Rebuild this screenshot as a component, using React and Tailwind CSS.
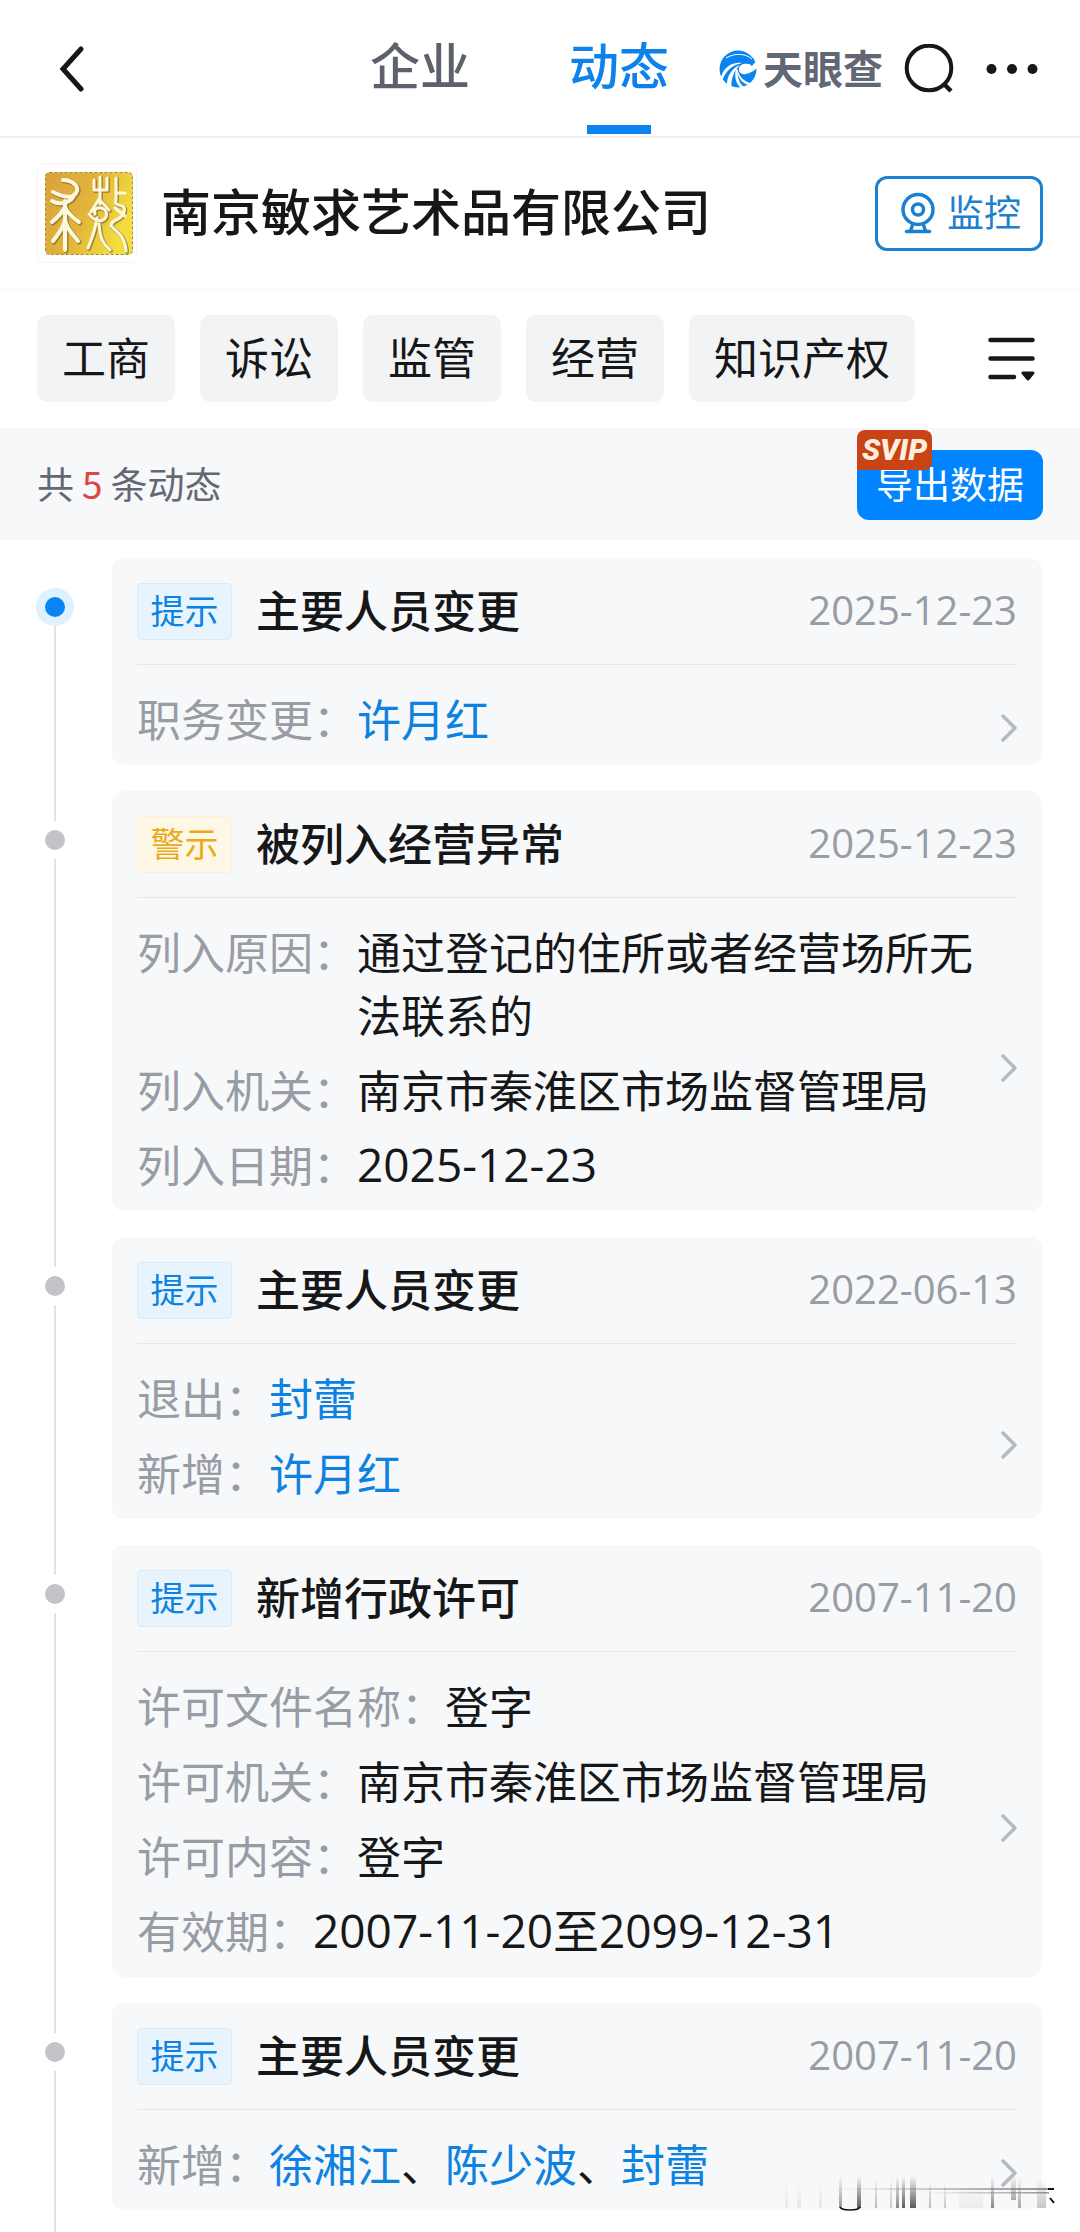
import { useState } from 'react'

const filters = ['工商', '诉讼', '监管', '经营', '知识产权']

const events = [
  {
    id: 1,
    level: '提示',
    title: '主要人员变更',
    date: '2025-12-23',
    rows: [{ label: '职务变更', people: ['许月红'] }],
  },
  {
    id: 2,
    level: '警示',
    title: '被列入经营异常',
    date: '2025-12-23',
    rows: [
      { label: '列入原因', text: '通过登记的住所或者经营场所无法联系的' },
      { label: '列入机关', text: '南京市秦淮区市场监督管理局' },
      { label: '列入日期', date: '2025-12-23' },
    ],
  },
  {
    id: 3,
    level: '提示',
    title: '主要人员变更',
    date: '2022-06-13',
    rows: [
      { label: '退出', people: ['封蕾'] },
      { label: '新增', people: ['许月红'] },
    ],
  },
  {
    id: 4,
    level: '提示',
    title: '新增行政许可',
    date: '2007-11-20',
    rows: [
      { label: '许可文件名称', text: '登字' },
      { label: '许可机关', text: '南京市秦淮区市场监督管理局' },
      { label: '许可内容', text: '登字' },
      { label: '有效期', date: '2007-11-20至2099-12-31' },
    ],
  },
  {
    id: 5,
    level: '提示',
    title: '主要人员变更',
    date: '2007-11-20',
    rows: [{ label: '新增', people: ['徐湘江', '陈少波', '封蕾'] }],
  },
]

function BrandMark() {
  return (
    <svg viewBox="0 0 38 38" className="w-[38px] h-[38px] shrink-0" aria-hidden="true">
      <circle cx="19" cy="19" r="18.5" fill="#0a84f0" />
      <path d="M38.500 12 C35 13 33 14.500 30 14 C26 13 21 14 20 18 C19.500 22 22 25 27 24 C32 23 36 20 39 17 Z" fill="#fff" />
      <path d="M34 8 C36 10 36 13 33 16 C31 14 29 13 26 13 C30 12 33 11 34 8 Z" fill="#0a84f0" />
      <path d="M7 8 C15 3 26 3 33 9" fill="none" stroke="#fff" strokeWidth="1" />
      <path d="M2 27 C5 17 13 12 23 13 C14 15 7 20 3.500 30 Z" fill="#fff" />
      <path d="M8 34 C8 26 13 18 21 15 C15 21 12 28 12.500 37 Z" fill="#fff" />
      <path d="M17 19 C15 27 17 34 22 38 L25 37 C20 33 18 27 19 20 Z" fill="#fff" />
      <path d="M19 21 C21 28 26 32 32 33 L30 35 C24 34 20 29 18.500 23 Z" fill="#fff" />
    </svg>
  )
}

function Seal() {
  return (
    <svg viewBox="0 0 88 83" className="w-[88px] h-[83px]" role="img" aria-label="公司标志">
      <defs>
        <linearGradient id="gold" x1="0" y1="0" x2="1" y2="0.4">
          <stop offset="0" stopColor="#d9a13c" />
          <stop offset="0.55" stopColor="#e2b53a" />
          <stop offset="1" stopColor="#f2dc3e" />
        </linearGradient>
      </defs>
      <rect x="0.5" y="0.5" width="87" height="82" rx="4" fill="url(#gold)" stroke="#a8893a" strokeDasharray="3 2" />
      <g fill="none" stroke="#6f5a26" strokeWidth="5" strokeLinecap="round" strokeLinejoin="round" transform="translate(1 1)" opacity="0.55">
        <path d="M18 8 C28 8 35 15 31 21 C28 26 20 26 8 20" />
        <path d="M7 29 C15 34 27 30 29 23 M20 29 V78" />
        <path d="M7 50 C13 45 17 41 20 35 C23 42 28 46 34 50" />
        <path d="M8 69 C13 62 18 57 20 48 C22 58 28 62 33 69" />
      </g>
      <g fill="none" stroke="#fdf8dc" strokeWidth="4" strokeLinecap="round" strokeLinejoin="round">
        <path d="M18 8 C28 8 35 15 31 21 C28 26 20 26 8 20" />
        <path d="M7 29 C15 34 27 30 29 23 M20 29 V78" />
        <path d="M7 50 C13 45 17 41 20 35 C23 42 28 46 34 50" />
        <path d="M8 69 C13 62 18 57 20 48 C22 58 28 62 33 69" />
      </g>
      <g fill="none" stroke="#6f5a26" strokeWidth="4" strokeLinecap="round" strokeLinejoin="round" transform="translate(1 1)" opacity="0.55">
        <path d="M49 8 V18 H62 V6 M55 5 V32 M46 40 L54 27 L64 38" />
        <path d="M44 42 C52 54 66 48 60 38 C54 34 48 36 50 42" />
        <path d="M52 46 C50 60 46 68 43 76 M54 52 C55 66 58 72 65 78" />
        <path d="M71 6 V28 C68 36 82 30 79 40 C76 50 66 46 66 54 C72 60 80 64 81 79" />
      </g>
      <g fill="none" stroke="#fdf8dc" strokeWidth="3" strokeLinecap="round" strokeLinejoin="round">
        <path d="M49 8 V18 H62 V6 M55 5 V32 M46 40 L54 27 L64 38" />
        <path d="M44 42 C52 54 66 48 60 38 C54 34 48 36 50 42" />
        <path d="M52 46 C50 60 46 68 43 76 M54 52 C55 66 58 72 65 78" />
        <path d="M71 6 V28 C68 36 82 30 79 40 C76 50 66 46 66 54 C72 60 80 64 81 79" />
        <path d="M72 21 H80 M70 36 L80 44" />
      </g>
    </svg>
  )
}

function TabButton({ label, active, onClick }) {
  return (
    <button type="button" onClick={onClick} className="flex flex-col items-center">
      <span className={`text-[50px] leading-[70px] font-medium ${active ? 'text-[#0d82ea]' : 'text-[#5c616d]'}`}>
        {label}
      </span>
      <span className={`mt-[27px] w-16 h-[9px] ${active ? 'bg-[#0a84f0]' : 'bg-transparent'}`}></span>
    </button>
  )
}

function Header() {
  const [tab, setTab] = useState('动态')

  return (
    <header className="flex items-start pl-[37px] pr-[42px] pt-7 pb-0.5 border-b-2 border-[#efeff0]">
      <button type="button" aria-label="返回" className="h-[82px] w-12 flex items-center justify-end">
        <svg viewBox="0 0 26 46" className="w-[26px] h-[46px]" fill="none" stroke="#161718" strokeWidth="5" strokeLinecap="round">
          <path d="M22 3 L4 23 L22 43" />
        </svg>
      </button>
      <nav className="ml-auto flex gap-[99px]">
        <TabButton label="企业" active={tab === '企业'} onClick={() => setTab('企业')} />
        <TabButton label="动态" active={tab === '动态'} onClick={() => setTab('动态')} />
      </nav>
      <div className="h-[82px] ml-[50px] flex items-center">
        <a href="#home" className="flex items-center gap-1.5">
          <BrandMark />
          <span className="pb-1 text-[40px] leading-[48px] font-bold text-[#626775]">天眼查</span>
        </a>
        <button type="button" aria-label="搜索" className="ml-[21px]">
          <svg viewBox="0 0 50 50" className="w-[50px] h-[50px]" fill="none" stroke="#161718" strokeWidth="4">
            <circle cx="25" cy="24" r="22.3" />
            <path d="M40 40 L47 47" strokeWidth="4.5" />
          </svg>
        </button>
        <button type="button" aria-label="更多" className="ml-8">
          <svg viewBox="0 0 52 12" className="w-[52px] h-3" fill="#161718">
            <circle cx="5.5" cy="6" r="5" />
            <circle cx="26" cy="6" r="5" />
            <circle cx="46.5" cy="6" r="5" />
          </svg>
        </button>
      </div>
    </header>
  )
}

function Company() {
  return (
    <section className="flex items-center px-[37px] pt-[25px] pb-[25px] border-b border-[#fafafa]">
      <div className="w-[100px] h-[100px] pl-1 flex items-center justify-center border border-[#f6f6f0] rounded-md">
        <Seal />
      </div>
      <h1 className="ml-6 pb-2 text-[50px] leading-[70px] font-medium text-[#161718]">南京敏求艺术品有限公司</h1>
      <button
        type="button"
        className="ml-auto h-[75px] pl-[23px] pr-[19px] flex items-center gap-3 border-3 border-[#1c82cf] rounded-xl text-[37px] leading-[50px] text-[#1b80cf]"
      >
        <svg viewBox="0 0 34 42" className="w-[34px] h-[42px]" fill="none" stroke="currentColor" strokeWidth="3.5">
          <circle cx="17" cy="17.5" r="15" />
          <circle cx="17" cy="17.5" r="5.5" />
          <path d="M11.500 33 L9.500 39 M22.500 33 L24.500 39" />
          <path d="M5.500 39.500 H28.500" strokeLinecap="round" />
        </svg>
        <span className="pb-1">监控</span>
      </button>
    </section>
  )
}

function FilterBar() {
  return (
    <div className="flex items-center px-[37px] py-[26px]">
      <div className="flex gap-[25px]">
        {filters.map((name) => (
          <button key={name} type="button" className="h-[87px] px-[25px] pb-1.5 rounded-[10px] bg-[#f2f3f5] text-[44px] leading-[60px] text-[#161718]">
            {name}
          </button>
        ))}
      </div>
      <button type="button" aria-label="筛选" className="ml-auto pr-2">
        <svg viewBox="0 0 47 44" className="w-[47px] h-11" fill="none" stroke="#161718" strokeWidth="4.5" strokeLinecap="round">
          <path d="M2.500 3 H44.500 M2.500 21.500 H44.500 M2.500 40 H26" />
          <path d="M35 36 H45 L40 42 Z" fill="#161718" strokeWidth="3" strokeLinejoin="round" />
        </svg>
      </button>
    </div>
  )
}

function Summary({ total }) {
  return (
    <div className="flex items-center justify-between px-[37px] pt-[22px] pb-5 bg-[#f7f8fa]">
      <p className="pb-1 text-[37px] leading-[50px] text-[#636873]">
        共<span className="mx-2 text-[#e04545]">{total}</span>条动态
      </p>
      <button type="button" className="relative h-[70px] px-[19px] pb-1 rounded-xl bg-[#0084ff] text-[37px] leading-[50px] text-white">
        导出数据
        <span className="absolute -top-5 left-0 h-10 w-[75px] rounded-t-lg rounded-br-lg bg-[#c84316] text-center font-['Roboto',sans-serif] text-[30px] leading-10 font-black italic text-[#ffeedd]">
          SVIP
        </span>
      </button>
    </div>
  )
}

function RowValue({ row }) {
  if (row.people) {
    return (
      <dd className="flex-1 text-[#161718]">
        {row.people.map((name, i) => (
          <span key={name}>
            {i > 0 && '、'}
            <a href={`#${name}`} className="text-[#0d82e0]">{name}</a>
          </span>
        ))}
      </dd>
    )
  }
  if (row.date) {
    return <dd className="flex-1 font-['Open_Sans','Noto_Sans_CJK_SC',sans-serif] text-[46px] text-[#161718]">{row.date}</dd>
  }
  return <dd className="flex-1 text-[#161718]">{row.text}</dd>
}

function EventCard({ event }) {
  const isWarning = event.level === '警示'

  return (
    <article className="flex-1 rounded-xl bg-[#f7f8fa] px-[25px] pt-[25px]">
      <div className="flex items-center pb-6 border-b border-[#e6e7ea]">
        <span
          className={`h-[57px] w-[95px] pb-1 flex items-center justify-center rounded-sm border text-[34px] leading-[46px] ${
            isWarning ? 'bg-[#fef7e6] border-[#fcf1d8] text-[#e8ab1c]' : 'bg-[#e7f4fd] border-[#d8ebf8] text-[#0d82e0]'
          }`}
        >
          {event.level}
        </span>
        <h2 className="ml-6 pb-1 text-[44px] leading-[53px] font-medium text-[#161718]">{event.title}</h2>
        <time className="ml-auto pb-1 font-['Open_Sans',sans-serif] text-[40px] leading-[50px] text-[#989ca4]">{event.date}</time>
      </div>
      <div className="mt-[22px] flex items-center gap-[25px]">
        <dl className="flex-1 flex flex-col gap-3 pb-[15px] text-[44px] leading-[63px]">
          {event.rows.map((row) => (
            <div key={row.label} className="flex">
              <dt className="shrink-0 text-[#989ca4]">{row.label}：</dt>
              <RowValue row={row} />
            </div>
          ))}
        </dl>
        <svg viewBox="0 0 16 28" className="w-4 h-7 mt-1 shrink-0" fill="none" stroke="#b5bac0" strokeWidth="3.5" strokeLinecap="round" strokeLinejoin="round">
          <path d="M2 2 L14 14 L2 26" />
        </svg>
      </div>
    </article>
  )
}

function Smudge() {
  return (
    <svg viewBox="0 0 280 36" className="absolute right-[25px] bottom-5 w-[280px] h-9 pointer-events-none" aria-hidden="true">
      <defs>
        <linearGradient id="fade" x1="0" y1="0" x2="0" y2="1">
          <stop offset="0" stopColor="#333" stopOpacity="0" />
          <stop offset="1" stopColor="#333" stopOpacity="0.8" />
        </linearGradient>
        <linearGradient id="streak" x1="0" y1="0" x2="1" y2="0">
          <stop offset="0" stopColor="#777" stopOpacity="0" />
          <stop offset="1" stopColor="#777" stopOpacity="0.8" />
        </linearGradient>
      </defs>
      <rect x="216" y="14" width="56" height="18" fill="#f7f8fa" />
      <g fill="url(#fade)">
        <rect x="10" y="6" width="3" height="26" opacity="0.1" />
        <rect x="22" y="6" width="4" height="26" opacity="0.1" />
        <rect x="44" y="6" width="3" height="26" opacity="0.12" />
        <rect x="64" y="0" width="3" height="32" opacity="0.6" />
        <rect x="82" y="0" width="4" height="32" />
        <rect x="100" y="2" width="2" height="30" opacity="0.4" />
        <rect x="115" y="2" width="2" height="30" opacity="0.3" />
        <rect x="121" y="0" width="3" height="32" opacity="0.7" />
        <rect x="127" y="0" width="3" height="32" />
        <rect x="135" y="0" width="6" height="32" />
        <rect x="154" y="4" width="2" height="28" opacity="0.4" />
        <rect x="169" y="4" width="2" height="28" opacity="0.3" />
        <rect x="184" y="10" width="24" height="22" opacity="0.08" />
        <rect x="216" y="0" width="3" height="32" opacity="0.7" />
        <rect x="236" y="0" width="5" height="24" opacity="0.5" />
        <rect x="243" y="2" width="3" height="30" opacity="0.5" />
        <rect x="262" y="2" width="9" height="30" opacity="0.3" />
      </g>
      <path d="M65 31 Q66 34 75 34 Q84 34 85 31" fill="none" stroke="#111" strokeWidth="1.5" />
      <rect x="60" y="12" width="214" height="2" fill="url(#streak)" />
      <rect x="150" y="16" width="124" height="1.500" fill="url(#streak)" />
      <path d="M273 13 H279 M275 22 L279 27" stroke="#111" strokeWidth="2" />
    </svg>
  )
}

function TimelineItem({ event, first, last }) {
  return (
    <li className="flex">
      <div className="w-[38px] mr-[38px] shrink-0 flex flex-col items-center">
        <div className={`w-0.5 h-[30px] ${first ? 'bg-transparent' : 'bg-[#e1e2e3]'}`}></div>
        <div className={`w-[38px] h-[38px] rounded-full flex items-center justify-center ${first ? 'bg-[#def1ff]' : ''}`}>
          <div className={`w-5 h-5 rounded-full ${first ? 'bg-[#0a84f5]' : 'bg-[#c2c4c7]'}`}></div>
        </div>
        <div className="w-0.5 flex-1 bg-[#e1e2e3]"></div>
      </div>
      <div className={`flex-1 flex ${last ? 'pb-[22px]' : 'pb-[26px]'}`}>
        <EventCard event={event} />
      </div>
    </li>
  )
}

export default function App() {
  return (
    <div className="min-h-screen bg-white font-['Noto_Sans_CJK_SC',sans-serif]">
      <Header />
      <main>
        <Company />
        <FilterBar />
        <Summary total={events.length} />
        <div className="relative">
          <ol className="pt-[18px] pl-9 pr-[38px]">
            {events.map((event, i) => (
              <TimelineItem key={event.id} event={event} first={i === 0} last={i === events.length - 1} />
            ))}
          </ol>
          <Smudge />
        </div>
      </main>
    </div>
  )
}
